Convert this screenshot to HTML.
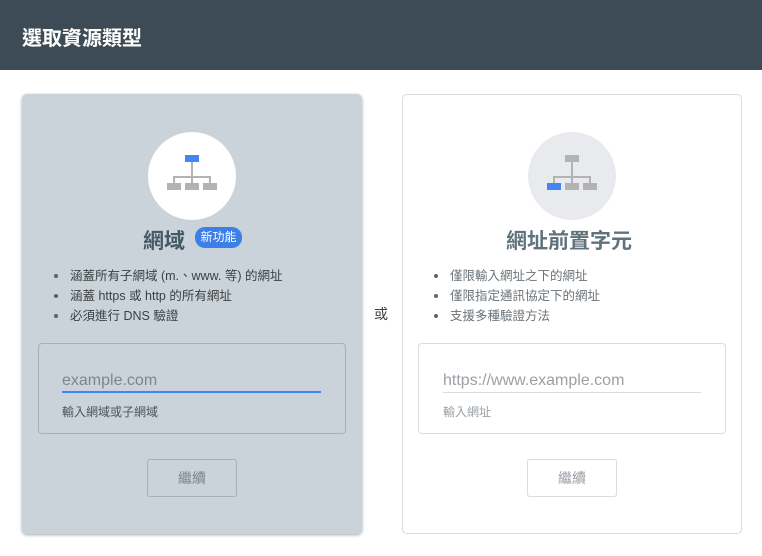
<!DOCTYPE html>
<html><head><meta charset="utf-8"><style>
*{box-sizing:border-box;margin:0;padding:0}
body{width:762px;height:556px;background:#fff;font-family:"Liberation Sans","Noto Sans CJK TC",sans-serif;position:relative;overflow:hidden}
.hdr{position:absolute;left:0;top:0;width:762px;height:70px;background:#3c4b55}
.hdr span{position:absolute;left:22px;top:22px;color:#fff;font-size:20px;font-weight:bold}
.abs{position:absolute}
.card{position:absolute;top:94px;width:340px;height:440px;border-radius:5px}
.circ{position:absolute;width:88px;height:88px;border-radius:50%}
.ttl{position:absolute;font-size:21px;font-weight:bold;white-space:nowrap}
ul{position:absolute;list-style:none;font-size:12.5px;line-height:20px}
li{position:relative;padding-left:18px;white-space:nowrap}
li:before{content:"";position:absolute;left:2px;top:8px;width:4px;height:4px;border-radius:50%;background:#5f6368}
.box{position:absolute;width:308px;height:91px;border-radius:4px}
.btn{position:absolute;width:90px;height:38px;border-radius:3px;font-size:14px;text-align:center;line-height:36px}
</style></head><body>
<div class="hdr"><span>選取資源類型</span></div>

<div class="card" style="left:22px;background:#cad3d9;box-shadow:0 1px 3px rgba(0,0,0,.35)"></div>
<div class="circ" style="left:148px;top:132px;background:#fff"></div>
<svg class="abs" style="left:148px;top:132px" width="88" height="88">
<rect x="37" y="23" width="14" height="7" fill="#4285f4"/>
<path d="M44 30V45M26 51V45H62V51M44 45V51" stroke="#b3b3b3" stroke-width="2" fill="none"/>
<rect x="19" y="51" width="14" height="7" fill="#b3b3b3"/><rect x="37" y="51" width="14" height="7" fill="#b3b3b3"/><rect x="55" y="51" width="14" height="7" fill="#b3b3b3"/>
</svg>
<div class="ttl" style="left:143px;top:225px;color:#455a64">網域</div>
<div class="abs" style="left:195px;top:227px;width:47px;height:21px;border-radius:10px;background:#3d7fe8;color:#fff;font-size:12px;line-height:21px;text-align:center">新功能</div>
<ul style="left:52px;top:266px;color:#3c4043">
<li>涵蓋所有子網域 (m.、www. 等) 的網址</li>
<li>涵蓋 https 或 http 的所有網址</li>
<li>必須進行 DNS 驗證</li>
</ul>
<div class="box" style="left:38px;top:343px;border:1px solid #a8b0b5"></div>
<div class="abs" style="left:62px;top:372px;font-size:16px;color:#7c868c">example.com</div>
<div class="abs" style="left:62px;top:391px;width:259px;height:2px;background:#4285f4"></div>
<div class="abs" style="left:62px;top:403px;font-size:12px;color:#4a5459">輸入網域或子網域</div>
<div class="btn" style="left:147px;top:459px;border:1px solid #a8b0b5;color:#7c868c">繼續</div>

<div class="abs" style="left:374px;top:304px;font-size:14px;color:#3c4043">或</div>

<div class="card" style="left:402px;border:1px solid #dadce0"></div>
<div class="circ" style="left:528px;top:132px;background:#e8eaed"></div>
<svg class="abs" style="left:528px;top:132px" width="88" height="88">
<rect x="37" y="23" width="14" height="7" fill="#b3b3b3"/>
<path d="M44 30V45M26 51V45H62V51M44 45V51" stroke="#b3b3b3" stroke-width="2" fill="none"/>
<rect x="19" y="51" width="14" height="7" fill="#4285f4"/><rect x="37" y="51" width="14" height="7" fill="#b3b3b3"/><rect x="55" y="51" width="14" height="7" fill="#b3b3b3"/>
</svg>
<div class="ttl" style="left:506px;top:225px;color:#60737d">網址前置字元</div>
<ul style="left:432px;top:266px;color:#6b7378">
<li>僅限輸入網址之下的網址</li>
<li>僅限指定通訊協定下的網址</li>
<li>支援多種驗證方法</li>
</ul>
<div class="box" style="left:418px;top:343px;border:1px solid #dadce0"></div>
<div class="abs" style="left:443px;top:372px;font-size:16px;color:#9aa0a6">https://www.example.com</div>
<div class="abs" style="left:443px;top:392px;width:258px;height:1px;background:#dadce0"></div>
<div class="abs" style="left:443px;top:403px;font-size:12px;color:#9aa0a6">輸入網址</div>
<div class="btn" style="left:527px;top:459px;border:1px solid #dadce0;color:#9aa0a6">繼續</div>
</body></html>
